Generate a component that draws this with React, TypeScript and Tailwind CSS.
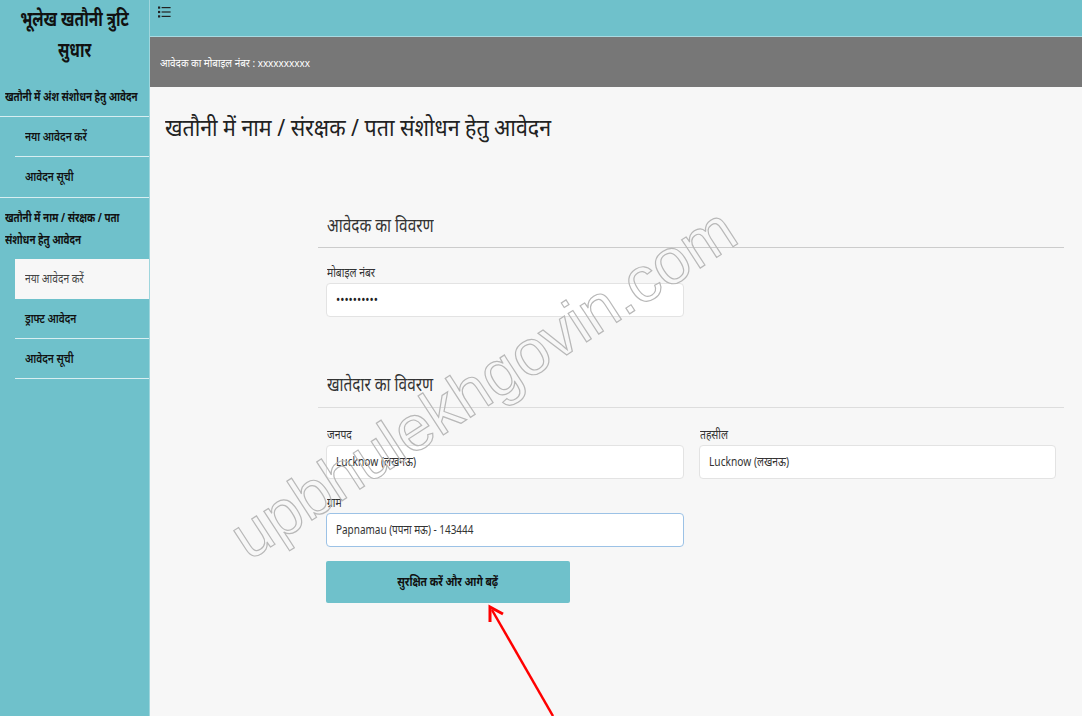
import React from "react";

const F = { fontFamily: '"Noto Sans", "Liberation Sans", sans-serif' };

function ListIcon() {
  return (
    <svg width="13" height="12" viewBox="0 0 13 12" fill="#222">
      <rect x="0" y="0.5" width="2.2" height="2.2" />
      <rect x="0" y="4.9" width="2.2" height="2.2" />
      <rect x="0" y="9.3" width="2.2" height="2.2" />
      <rect x="3.6" y="1" width="9" height="1.2" />
      <rect x="3.6" y="5.4" width="9" height="1.2" />
      <rect x="3.6" y="9.8" width="9" height="1.2" />
    </svg>
  );
}

export default function App() {
  return (
    <div className="relative flex w-[1082px] h-[716px] overflow-hidden bg-[#f7f7f7]" style={F}>
      <aside className="w-[150px] shrink-0 bg-[#6fc1cb] text-[#111] border-r border-[#9fd6dd]">
        <div className="h-[78px] pt-[3px] text-center text-[20px] font-bold leading-[31px] text-[#111] whitespace-nowrap">
          <span className="inline-block scale-x-[0.77] origin-center">भूलेख खतौनी त्रुटि</span>
          <br />
          <span className="inline-block scale-x-[0.77] origin-center">सुधार</span>
        </div>
        <div className="h-[39px] flex items-center px-[5px] text-[12px] font-bold whitespace-nowrap border-b border-[#d8eef1]">
          <span className="inline-block scale-x-[0.82] origin-left">खतौनी में अंश संशोधन हेतु आवेदन</span>
        </div>
        <div className="ml-[15px]">
          <div className="h-[40px] flex items-center pl-[10px] text-[12px] font-semibold border-b border-[#d8eef1]">
            <span className="inline-block scale-x-[0.85] origin-left">नया आवेदन करें</span>
          </div>
          <div className="h-[40px] flex items-center pl-[10px] text-[12px] font-semibold">
            <span className="inline-block scale-x-[0.85] origin-left">आवेदन सूची</span>
          </div>
        </div>
        <div className="h-[62px] flex flex-col justify-center px-[5px] text-[12px] font-bold leading-[22px] whitespace-nowrap border-t border-[#d8eef1]">
          <span className="block scale-x-[0.82] origin-left">खतौनी में नाम / संरक्षक / पता</span>
          <span className="block scale-x-[0.82] origin-left">संशोधन हेतु आवेदन</span>
        </div>
        <div className="ml-[15px]">
          <div className="h-[40px] flex items-center pl-[10px] text-[12px] text-[#444] bg-[#f7f7f7]">
            <span className="inline-block scale-x-[0.85] origin-left">नया आवेदन करें</span>
          </div>
          <div className="h-[40px] flex items-center pl-[10px] text-[12px] font-semibold border-b border-[#d8eef1]">
            <span className="inline-block scale-x-[0.85] origin-left">ड्राफ्ट आवेदन</span>
          </div>
          <div className="h-[40px] flex items-center pl-[10px] text-[12px] font-semibold border-b border-[#d8eef1]">
            <span className="inline-block scale-x-[0.85] origin-left">आवेदन सूची</span>
          </div>
        </div>
      </aside>

      <main className="flex-1 flex flex-col">
        <div className="h-[37px] shrink-0 bg-[#6fc1cb] border-b border-[#a9dbe2] pl-[8px] pt-[6px]">
          <ListIcon />
        </div>
        <div className="h-[50px] shrink-0 bg-[#777777] flex items-center pl-[10px] pt-[2px] text-[11px] text-white whitespace-nowrap">
          <span className="inline-block scale-x-[0.9] origin-left">आवेदक का मोबाइल नंबर : xxxxxxxxxx</span>
        </div>
        <div className="flex-1 pl-[15px] pt-[24px]">
          <h1 className="text-[24px] leading-[32px] text-[#222] whitespace-nowrap">
            <span className="inline-block scale-x-[0.89] origin-left">खतौनी में नाम / संरक्षक / पता संशोधन हेतु आवेदन</span>
          </h1>
          <div className="ml-[153px] mt-[67px] w-[746px]">
            <h2 className="px-[9px] text-[19px] leading-[30px] text-[#333]">
              <span className="inline-block scale-x-[0.81] origin-left">आवेदक का विवरण</span>
            </h2>
            <div className="mt-[7px] border-t border-[#cccccc]" />
            <div className="grid grid-cols-2 gap-x-[15px] px-[8px] mt-[16px]">
              <div>
                <div className="pl-[1px] text-[12px] leading-[18px] text-[#333]">
                  <span className="inline-block scale-x-[0.86] origin-left">मोबाइल नंबर</span>
                </div>
                <div className="mt-[1px] h-[34px] rounded-[4px] border border-[#e3e3e3] bg-white flex items-center pl-[9px] text-[12px] text-[#222]">
                  <span className="inline-block scale-x-[0.93] origin-left">••••••••••</span>
                </div>
              </div>
              <div />
            </div>

            <h2 className="mt-[52px] px-[9px] text-[19px] leading-[30px] text-[#333]">
              <span className="inline-block scale-x-[0.81] origin-left">खातेदार का विवरण</span>
            </h2>
            <div className="mt-[8px] border-t border-[#dddddd]" />
            <div className="grid grid-cols-2 gap-x-[15px] gap-y-[15px] px-[8px] mt-[18px]">
              <div>
                <div className="pl-[1px] text-[12px] leading-[18px] text-[#333]">
                  <span className="inline-block scale-x-[0.86] origin-left">जनपद</span>
                </div>
                <div className="mt-[1px] h-[34px] rounded-[4px] border border-[#e3e3e3] bg-white flex items-center pl-[9px] text-[12px] text-[#333] whitespace-nowrap">
                  <span className="inline-block scale-x-[0.85] origin-left">Lucknow (लखनऊ)</span>
                </div>
              </div>
              <div>
                <div className="pl-[1px] text-[12px] leading-[18px] text-[#333]">
                  <span className="inline-block scale-x-[0.86] origin-left">तहसील</span>
                </div>
                <div className="mt-[1px] h-[34px] rounded-[4px] border border-[#e3e3e3] bg-white flex items-center pl-[9px] text-[12px] text-[#333] whitespace-nowrap">
                  <span className="inline-block scale-x-[0.85] origin-left">Lucknow (लखनऊ)</span>
                </div>
              </div>
              <div>
                <div className="pl-[1px] text-[12px] leading-[18px] text-[#333]">
                  <span className="inline-block scale-x-[0.86] origin-left">ग्राम</span>
                </div>
                <div className="mt-[1px] h-[34px] rounded-[4px] border border-[#9cc2e6] bg-white flex items-center pl-[9px] text-[12px] text-[#333] whitespace-nowrap">
                  <span className="inline-block scale-x-[0.83] origin-left">Papnamau (पपना मऊ) - 143444</span>
                </div>
              </div>
              <div />
            </div>
            <div className="px-[8px] mt-[14px]">
              <button className="w-[244px] h-[42px] rounded-[2px] bg-[#6fc1cb] text-[12px] font-bold text-[#111] whitespace-nowrap">
                <span className="inline-block scale-x-[0.86] origin-center">सुरक्षित करें और आगे बढ़ें</span>
              </button>
            </div>
          </div>
        </div>
      </main>

      <div
        className="pointer-events-none absolute left-[483px] top-[383px] -translate-x-1/2 -translate-y-1/2 -rotate-[33deg] whitespace-nowrap text-[64px] leading-none text-transparent [-webkit-text-stroke:1.2px_#b8b8b8]"
        style={{ fontFamily: '"Liberation Sans", Arial, sans-serif' }}
      >
        upbhulekhgovin.com
      </div>

      <svg className="pointer-events-none absolute left-0 top-0" width="1082" height="716">
        <line x1="553" y1="716" x2="492" y2="610" stroke="#ff0000" strokeWidth="2.5" />
        <polyline points="490,622 490,607 503,614" fill="none" stroke="#ff0000" strokeWidth="3" />
      </svg>
    </div>
  );
}
